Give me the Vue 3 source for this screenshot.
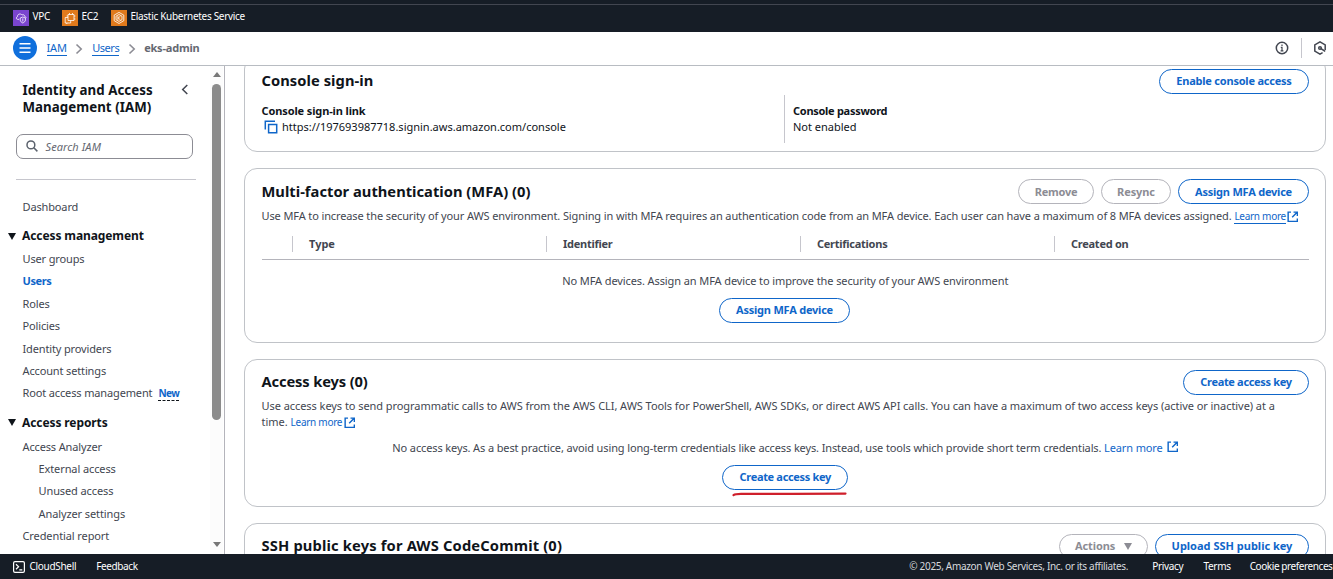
<script setup>
import { h } from 'vue'

const services = [
  { id: 'vpc', label: 'VPC' },
  { id: 'ec2', label: 'EC2' },
  { id: 'eks', label: 'Elastic Kubernetes Service' },
]

const management = [
  { label: 'User groups' },
  { label: 'Users', active: true },
  { label: 'Roles' },
  { label: 'Policies' },
  { label: 'Identity providers' },
  { label: 'Account settings' },
  { label: 'Root access management', badge: 'New' },
]

const reports = [
  { label: 'Access Analyzer' },
  { label: 'External access', nested: true },
  { label: 'Unused access', nested: true },
  { label: 'Analyzer settings', nested: true },
  { label: 'Credential report' },
]

const columns = ['Type', 'Identifier', 'Certifications', 'Created on']

const ExternalIcon = () =>
  h('svg', { viewBox: '0 0 12 12', width: 12, height: 12, fill: 'none', stroke: 'currentColor', 'stroke-width': 1.5 }, [
    h('path', { d: 'M4.2 1.2H1.2V10.8H10.8V7.8M6.8 1.2H10.8V5.2M10.6 1.4L5.4 6.6' }),
  ])
</script>

<template>
  <div class="console">
    <div class="favorites">
      <div v-for="s in services" :key="s.id" class="service">
        <svg class="service-icon" :class="s.id" viewBox="0 0 16 16" fill="none" stroke="#fff" stroke-width=".8">
          <template v-if="s.id === 'vpc'">
            <path d="M6 9.4H4.8C3.2 9.4 2.7 7.3 4.4 6.7C4.2 4.2 7.4 3 9 5C10.4 4.2 11.6 5 11.5 6.2C12.4 6.4 13 7 13 8" />
            <path d="M9.8 7L12.4 8V10C12.4 11.4 11.2 12.3 9.8 13C8.4 12.3 7.2 11.4 7.2 10V8ZM9.8 8.4V11.5" />
          </template>
          <template v-else-if="s.id === 'ec2'">
            <path d="M6 4.5H12V10.5H6ZM6 7.5H3.2V13H8.7V10.5M7.5 3V4.5M10.5 3V4.5M12 6H13.4M12 9H13.4M4.8 13V14M4.6 6H6" />
          </template>
          <template v-else>
            <path d="M8 2.4L12.8 5.1V10.7L8 13.5L3.2 10.7V5.1Z" />
            <path d="M8 4.5L11 6.2V9.7L8 11.4L5 9.7V6.2ZM6.9 6.2V9.8M9.4 6.2L7.2 8L9.4 9.8" />
          </template>
        </svg>
        <span class="service-label">{{ s.label }}</span>
      </div>
    </div>

    <header class="topbar">
      <button class="menu" aria-label="Menu">
        <svg width="12" height="12" viewBox="0 0 12 12" stroke="#fff" stroke-width="1.5"><path d="M.5 1.7H11.5M.5 6H11.5M.5 10.3H11.5" /></svg>
      </button>
      <nav class="crumbs">
        <a>IAM</a>
        <svg class="chevron" viewBox="0 0 8 12"><path d="M1.5 1.5L6.2 6L1.5 10.5" /></svg>
        <a class="crumb-users">Users</a>
        <svg class="chevron" viewBox="0 0 8 12"><path d="M1.5 1.5L6.2 6L1.5 10.5" /></svg>
        <b>eks-admin</b>
      </nav>
      <div class="tools">
        <svg width="14" height="14" viewBox="0 0 14 14" fill="none" stroke="#424650" stroke-width="1.5">
          <circle cx="7" cy="7" r="5.7" /><path d="M7 3.5V5M5.8 6.3H7V9.7M5.6 9.8H8.4" stroke-width="1.2" />
        </svg>
        <i class="tool-rule"></i>
        <svg width="14" height="14" viewBox="0 0 14 14" fill="none" stroke="#424650" stroke-width="1.5">
          <path d="M9.6 11.7L7 13.1L1.8 10.1V3.9L7 .9L12.2 3.9V9" /><circle cx="7" cy="7" r="1.3" /><path d="M7.6 7.4L12.2 10.4" stroke-width="1.7" />
        </svg>
      </div>
    </header>

    <div class="body">
      <aside class="sidebar">
        <div class="side-content">
          <div class="side-head">
            <h2>Identity and Access<br />Management (IAM)</h2>
            <svg width="8" height="11" viewBox="0 0 8 11" fill="none" stroke="#424650" stroke-width="1.5"><path d="M6.3 1L1.7 5.5L6.3 10" /></svg>
          </div>
          <div class="search">
            <svg width="12" height="12" viewBox="0 0 12 12" fill="none" stroke="#5b626d" stroke-width="1.5"><circle cx="4.9" cy="4.9" r="3.9" /><path d="M7.8 7.8L11.4 11.4" /></svg>
            <span>Search IAM</span>
          </div>
          <div class="side-rule"></div>
          <div class="nav-item">Dashboard</div>
          <div class="nav-title"><i class="caret"></i><span>Access management</span></div>
          <div v-for="n in management" :key="n.label" class="nav-item" :class="{ active: n.active }">
            {{ n.label }}<span v-if="n.badge" class="badge">{{ n.badge }}</span>
          </div>
          <div class="nav-title second"><i class="caret"></i><span>Access reports</span></div>
          <div v-for="n in reports" :key="n.label" class="nav-item" :class="{ nested: n.nested }">{{ n.label }}</div>
        </div>
        <div class="scrollbar">
          <i class="arrow up"></i>
          <i class="thumb"></i>
          <i class="arrow down"></i>
        </div>
      </aside>

      <main class="main">
        <section class="card signin">
          <div class="card-head">
            <h3 class="t-console">Console sign-in</h3>
            <button class="btn w150">Enable console access</button>
          </div>
          <div class="details">
            <div class="detail">
              <b class="t-link">Console sign-in link</b>
              <div class="copy-row">
                <svg width="14" height="14" viewBox="0 0 14 14" fill="none" stroke="#0f66c9" stroke-width="1.5"><path d="M1.3 9.5V1.3H11" /><path d="M4.6 4.6H12.7V12.7H4.6Z" /></svg>
                <span>https://197693987718.signin.aws.amazon.com/console</span>
              </div>
            </div>
            <div class="detail second-detail">
              <b class="t-pass">Console password</b>
              <span>Not enabled</span>
            </div>
          </div>
        </section>

        <section class="card mfa">
          <div class="card-head">
            <h3 class="t-mfa">Multi-factor authentication (MFA) (0)</h3>
            <div class="actions">
              <button class="btn disabled w76">Remove</button>
              <button class="btn disabled w70">Resync</button>
              <button class="btn w131">Assign MFA device</button>
            </div>
          </div>
          <p class="desc"><span class="t-mfadesc">Use MFA to increase the security of your AWS environment. Signing in with MFA requires an authentication code from an MFA device. Each user can have a maximum of 8 MFA devices assigned.</span> <a class="learn underlined">Learn more</a><ExternalIcon class="ext tight" /></p>
          <div class="thead">
            <span v-for="c in columns" :key="c" class="th">{{ c }}</span>
          </div>
          <p class="empty t-mfaempty">No MFA devices. Assign an MFA device to improve the security of your AWS environment</p>
          <button class="btn w131 center">Assign MFA device</button>
        </section>

        <section class="card keys">
          <div class="card-head">
            <h3 class="t-keys">Access keys (0)</h3>
            <button class="btn w126">Create access key</button>
          </div>
          <p class="desc"><span class="t-keysdesc">Use access keys to send programmatic calls to AWS from the AWS CLI, AWS Tools for PowerShell, AWS SDKs, or direct AWS API calls. You can have a maximum of two access keys (active or inactive) at a</span><br />time. <a class="learn">Learn more</a><ExternalIcon class="ext snug" /></p>
          <p class="empty t-keysempty">No access keys. As a best practice, avoid using long-term credentials like access keys. Instead, use tools which provide short term credentials. <a>Learn more</a><ExternalIcon class="ext" /></p>
          <div class="marked">
            <button class="btn w126">Create access key</button>
            <svg class="stroke" width="116" height="6" viewBox="0 0 116 6" fill="none" stroke="#cf1f2b" stroke-width="2.2" stroke-linecap="round"><path d="M1.5 4.1C3 3 5 2.8 9 2.8H60L113.5 2.6" /></svg>
          </div>
        </section>

        <section class="card ssh">
          <div class="card-head">
            <h3 class="t-ssh">SSH public keys for AWS CodeCommit (0)</h3>
            <div class="actions">
              <button class="btn disabled w89">Actions <i class="caret grey"></i></button>
              <button class="btn w154">Upload SSH public key</button>
            </div>
          </div>
        </section>
      </main>
    </div>

    <footer class="footer">
      <svg width="12" height="12" viewBox="0 0 12 12" fill="none" stroke="#fff" stroke-width="1.2"><rect x=".6" y=".6" width="10.8" height="10.8" rx="1.4" /><path d="M3 3.3L5.6 5.8L3 8.3M6.3 8.8H9.3" /></svg>
      <span class="f-shell">CloudShell</span>
      <span class="f-feedback">Feedback</span>
      <span class="f-copy">© 2025, Amazon Web Services, Inc. or its affiliates.</span>
      <span class="f-privacy">Privacy</span>
      <span class="f-terms">Terms</span>
      <span class="f-cookie">Cookie preferences</span>
    </footer>
  </div>
</template>

<style>
html, body { margin: 0; overflow: hidden; background: #fff; }
</style>

<style scoped>
.console { width: 1333px; height: 579px; display: flex; flex-direction: column; overflow: hidden; font-family: "Noto Sans", "Open Sans", sans-serif; font-size: 11px; color: #0f141a; white-space: nowrap; }
h2, h3, p { margin: 0; }
svg, i { display: block; flex: none; }
button { font-family: inherit; margin: 0; padding: 0; }
a { color: #0f66c9; }

.favorites { box-sizing: border-box; height: 32px; flex: none; background: #161d26; border-top: 4px solid #161d26; box-shadow: inset 0 1px #424650; display: flex; align-items: center; padding: 0 0 4px 13px; color: #fff; font-size: 10px; letter-spacing: -0.3px; }
.service { display: flex; align-items: center; gap: 3px; }
.service:nth-child(1), .service:nth-child(2) { width: 49px; }
.service-icon { width: 16px; height: 16px; margin-top: 3px; }
.service-label { margin-left: 0.5px; }
.vpc { background: #7a45cf; }
.ec2, .eks { background: #e07a1c; }

.topbar { box-sizing: border-box; height: 34px; flex: none; border-bottom: 1px solid #b8bcc2; display: flex; align-items: center; padding-left: 12.5px; }
.menu { width: 24px; height: 24px; margin-top: -1px; border: 0; border-radius: 50%; background: #0f6fdc; display: flex; align-items: center; justify-content: center; }
.crumbs { display: flex; align-items: center; margin-left: 10px; font-size: 11px; }
.crumbs a { line-height: 14px; border-bottom: 1px solid #0f66c9; letter-spacing: -0.15px; }
.crumbs .crumb-users { letter-spacing: -0.45px; }
.crumbs b { color: #656871; letter-spacing: -0.2px; margin: -2px 0 0 -0.5px; }
.chevron { width: 8px; height: 12px; margin: 0 8.7px; fill: none; stroke: #8c8c94; stroke-width: 1.6; }
.tools { display: flex; align-items: center; margin: -1px 6px 0 auto; }
.tool-rule { width: 1px; height: 20px; background: #c6c6cd; margin: 0 11px 0 12px; }

.body { height: 488px; flex: none; display: flex; overflow: hidden; }
.sidebar { box-sizing: border-box; width: 225px; flex: none; border-right: 1px solid #b4b4bb; display: flex; }
.side-content { width: 210px; flex: none; overflow: hidden; }
.side-head { display: flex; justify-content: space-between; padding: 16px 21px 0 22.5px; height: 52px; }
.side-head h2 { font-size: 13.3px; line-height: 17px; letter-spacing: 0.04px; }
.side-head svg { margin-top: 2px; }
.search { box-sizing: border-box; width: 177px; height: 25px; margin-left: 16px; border: 1px solid #8c8c94; border-radius: 7px; display: flex; align-items: center; padding-left: 9px; gap: 7.5px; font-style: italic; color: #656871; letter-spacing: 0.08px; }
.search svg { margin-top: -1px; }
.side-rule { width: 180px; height: 1px; background: #c6c6cd; margin: 20px 0 16px 16px; }
.nav-item { height: 22.4px; line-height: 22.4px; padding-left: 22.5px; color: #424650; letter-spacing: -0.14px; }
.nav-item:last-of-type, .nav-item.nested { letter-spacing: -0.1px; }
.nav-item.nested { padding-left: 38.5px; }
.nav-item.active { color: #0f66c9; font-weight: 700; letter-spacing: -0.4px; }
.nav-title { height: 23.6px; line-height: 23.6px; display: flex; align-items: center; padding-left: 8px; gap: 5.5px; font-weight: 700; font-size: 12px; letter-spacing: -0.1px; margin-top: 6px; }
.nav-title.second { margin-top: 5.4px; height: 25.5px; line-height: 25.5px; }
.nav-title span { padding-left: 0.5px; }
.caret { width: 0; height: 0; border: 4.5px solid transparent; border-top: 7px solid #0f141a; border-bottom: 0; }
.caret.grey { border-top-color: #8c8c94; display: inline-block; margin-left: 6px; }
.badge { display: inline-block; line-height: 13px; margin-left: 6px; border-bottom: 1px dashed #0f141a; color: #0f66c9; font-size: 10px; font-weight: 700; letter-spacing: -0.5px; }
.scrollbar { width: 13px; display: flex; flex-direction: column; align-items: center; background: #fcfcfc; padding: 6px 0 7px; box-sizing: border-box; }
.thumb { width: 9px; height: 336px; border-radius: 5px; background: #8b8b8b; margin-top: 7px; }
.arrow { border: 4.5px solid transparent; width: 0; height: 0; }
.up { border-top: 0; border-bottom: 5px solid #777; }
.down { border-bottom: 0; border-top: 5px solid #777; margin-top: auto; }

.main { flex: 1; padding-left: 19px; }
.card { box-sizing: border-box; width: 1082px; border: 1px solid #c0c3c8; border-radius: 13px; padding: 10px 16px 0 16.5px; margin-bottom: 16px; }
.signin { height: 96px; margin-top: -10px; padding-top: 12px; }
.mfa { height: 175px; }
.keys { height: 148px; }
.ssh { height: 160px; }
.card-head { height: 25px; display: flex; justify-content: space-between; align-items: center; }
.card-head h3 { font-size: 14.7px; line-height: 20px; padding-bottom: 2px; }
.card-head .t-console { letter-spacing: 0.06px; padding-bottom: 4px; }
.t-mfa { letter-spacing: 0.02px; }
.card-head .t-keys { letter-spacing: -0.13px; padding-bottom: 3px; }
.card-head .t-ssh { letter-spacing: 0.16px; padding-bottom: 4px; }
.actions { display: flex; gap: 7px; }
.btn { box-sizing: border-box; height: 25px; flex: none; border: 1.5px solid #0f66c9; border-radius: 13px; background: #fff; color: #0f66c9; font-size: 11px; font-weight: 700; letter-spacing: -0.22px; white-space: nowrap; }
.btn.disabled { border-color: #b4b4bb; color: #8c8c94; }
.w150 { width: 150px; padding-bottom: 2px; }
.w76 { width: 76px; }
.w70 { width: 70px; letter-spacing: -0.1px; }
.w131 { width: 131px; }
.w126 { width: 126px; letter-spacing: -0.33px; padding-bottom: 2px; }
.w89 { width: 89px; padding-bottom: 2px; letter-spacing: -0.1px; }
.w154 { width: 154px; letter-spacing: 0; padding-bottom: 2px; }
.center { display: block; margin: 0 auto; position: relative; left: -0.75px; padding-bottom: 2px; }
.details { display: flex; margin-top: 1px; }
.detail { width: 522.5px; height: 48px; display: flex; flex-direction: column; line-height: 16px; box-sizing: border-box; padding-top: 8px; }
.t-link { letter-spacing: -0.12px; }
.t-pass { letter-spacing: -0.28px; }
.second-detail { border-left: 1px solid #c6c6cd; padding-left: 8px; }
.copy-row { display: flex; align-items: center; gap: 4.5px; padding-left: 2px; }
.desc { line-height: 16px; height: 16px; color: #424650; margin-top: 4px; }
.t-mfadesc { letter-spacing: -0.115px; }
.t-keysdesc { letter-spacing: -0.058px; }
.t-mfaempty { letter-spacing: -0.1px; }
.t-keysempty { letter-spacing: -0.125px; }
.learn { font-size: 10px; letter-spacing: -0.28px; }
.underlined { border-bottom: 1px solid #0f66c9; }
.ext { display: inline-block; width: 11.5px; height: 11.5px; margin-left: 4px; vertical-align: -0.5px; color: #0f66c9; }
.ext.snug { margin-left: 1.5px; vertical-align: -2px; }
.ext.tight { margin-left: 1px; vertical-align: -2px; }
.thead { display: flex; height: 36px; box-sizing: border-box; padding-left: 30.5px; border-bottom: 1px solid #b4b4bb; padding-top: 12px; margin-bottom: 13px; }
.th { box-sizing: border-box; width: 254px; flex: none; height: 16px; line-height: 16px; border-left: 1px solid #c6c6cd; padding-left: 16px; font-weight: 700; color: #424650; letter-spacing: -0.26px; }
.th:first-child { letter-spacing: 0; }
.thead .th:last-child { flex: 1; width: auto; }
.empty { text-align: center; line-height: 16px; height: 16px; color: #424650; margin-bottom: 9px; }
.keys .desc { height: 32px; margin-top: 3px; }
.keys .empty { margin-top: 10px; }
.marked { position: relative; width: 126px; margin: 0 auto; }
.stroke { position: absolute; left: 10px; top: 26px; }

.footer { box-sizing: border-box; height: 25px; flex: none; background: #161d26; color: #fff; display: flex; align-items: center; padding: 0 0.5px 2px 13px; font-size: 10px; letter-spacing: -0.3px; }
.footer svg { margin-top: 2px; }
.f-shell { margin-left: 4.5px; }
.f-feedback { margin-left: 20px; letter-spacing: -0.4px; }
.f-copy { margin-left: auto; color: #d8dade; letter-spacing: -0.32px; }
.f-privacy { margin-left: 24px; }
.f-terms { margin-left: 20px; }
.f-cookie { margin-left: 19px; letter-spacing: -0.42px; }
</style>
